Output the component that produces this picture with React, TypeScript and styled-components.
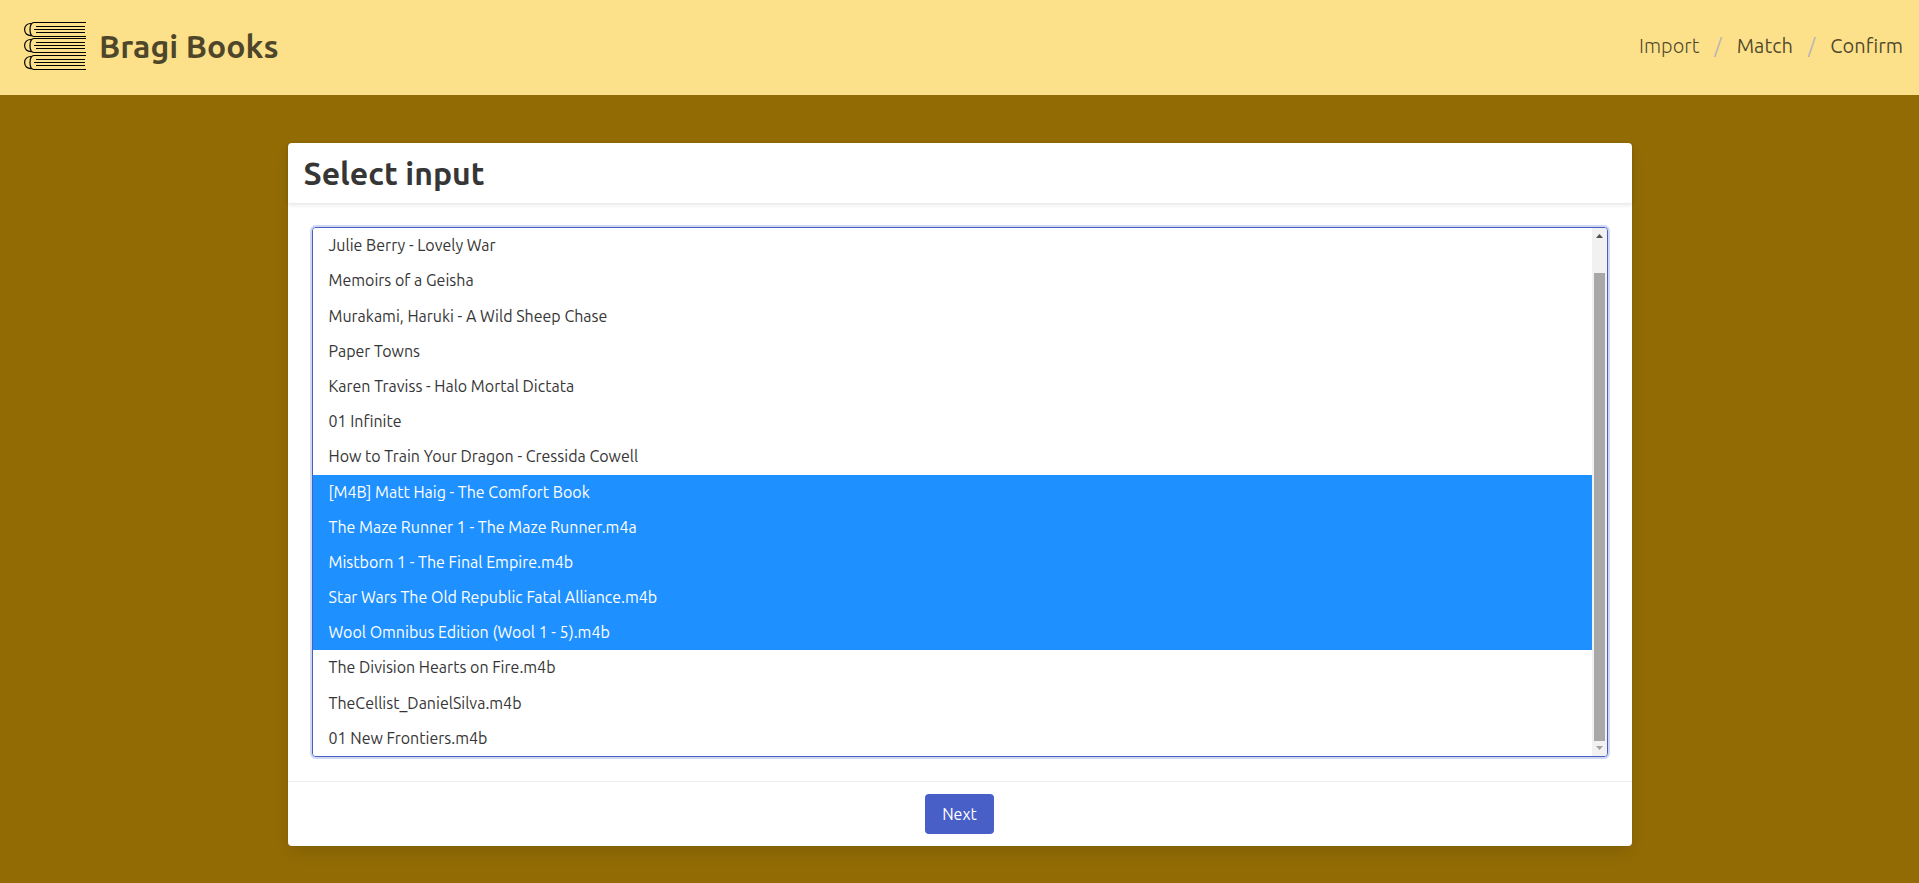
import React, { useEffect, useRef } from "react";
import styled, { createGlobalStyle } from "styled-components";

const GlobalStyle = createGlobalStyle`
  *, *::before, *::after { box-sizing: border-box; }
  html { background: #926b05; }
  body {
    margin: 0;
    color: #363636;
    font-family: Ubuntu, "Open Sans", "Noto Sans", sans-serif;
    font-size: 16px;
    line-height: 24px;
  }
`;

const Header = styled.header`
  display: flex;
  align-items: center;
  justify-content: space-between;
  min-height: 95px;
  padding: 0 16px 4px 24px;
  background: #fce08a;
`;

const Brand = styled.a`
  display: flex;
  align-items: center;
  gap: 12px;
  color: rgba(0, 0, 0, 0.7);
  font-size: 32px;
  font-weight: 700;
  line-height: 36px;
  text-decoration: none;
`;

const Logo = styled.svg`
  width: 63px;
  height: 50px;
`;

const Steps = styled.ol`
  display: flex;
  margin: 0;
  padding: 0;
  list-style: none;
  font-size: 20px;
  line-height: 30px;
`;

const Step = styled.li`
  display: flex;

  & + &::before {
    content: "/";
    padding: 0 15px;
    color: #b5b5b5;
  }
`;

const StepLink = styled.a<{ $light?: boolean }>`
  color: rgba(0, 0, 0, 0.7);
  font-weight: ${(p) => (p.$light ? 300 : 400)};
  text-decoration: none;
`;

const Main = styled.main`
  padding: 48px 24px 37px;
`;

const Card = styled.form`
  max-width: 1344px;
  margin: 0 auto;
  background: #fff;
  border-radius: 4px;
  box-shadow: 0 8px 16px -2px rgba(10, 10, 10, 0.1), 0 0 0 1px rgba(10, 10, 10, 0.02);
`;

const CardHeader = styled.div`
  padding: 12px 16px;
  box-shadow: 0 2px 4px rgba(10, 10, 10, 0.1);
`;

const Title = styled.label`
  display: block;
  font-size: 32px;
  font-weight: 700;
  line-height: 36px;
`;

const CardContent = styled.div`
  padding: 24px;
`;

const ListBox = styled.div`
  display: flex;
  overflow: hidden;
  background: #fff;
  border: 1px solid #485fc7;
  border-radius: 4px;
  box-shadow: 0 0 0 2px rgba(72, 95, 199, 0.25);
`;

const FileList = styled.select`
  flex: 1;
  min-width: 0;
  padding: 0;
  color: #363636;
  font: inherit;
  background: #fff;
  border: 0;
  border-radius: 0;
  outline: none;
  scrollbar-width: none;
`;

const FileOption = styled.option`
  box-sizing: content-box;
  padding: 8px 16px;

  &:checked {
    color: #fff;
    -webkit-text-fill-color: #fff;
    background: linear-gradient(#1e90ff, #1e90ff);
  }
`;

const ScrollBar = styled.div`
  display: flex;
  flex-direction: column;
  width: 15px;
  background: #f1f1f1;
`;

const ScrollArrow = styled.svg`
  width: 15px;
  height: 15px;
`;

const ScrollTrack = styled.div`
  display: flex;
  flex: 1;
  flex-direction: column;
  justify-content: flex-end;
  padding: 0 2px;
`;

const ScrollThumb = styled.div`
  height: 94%;
  background: #a8a8a8;
`;

const CardFooter = styled.div`
  display: flex;
  justify-content: center;
  padding: 12px;
  border-top: 1px solid #ededed;
`;

const NextButton = styled.button`
  height: 40px;
  padding: 0 17px;
  color: #fff;
  font: inherit;
  background: #485fc7;
  border: 0;
  border-radius: 4px;
  cursor: pointer;
`;

const files = [
  "Julie Berry - Lovely War",
  "Memoirs of a Geisha",
  "Murakami, Haruki - A Wild Sheep Chase",
  "Paper Towns",
  "Karen Traviss - Halo Mortal Dictata",
  "01 Infinite",
  "How to Train Your Dragon - Cressida Cowell",
  "[M4B] Matt Haig - The Comfort Book",
  "The Maze Runner 1 - The Maze Runner.m4a",
  "Mistborn 1 - The Final Empire.m4b",
  "Star Wars The Old Republic Fatal Alliance.m4b",
  "Wool Omnibus Edition (Wool 1 - 5).m4b",
  "The Division Hearts on Fire.m4b",
  "TheCellist_DanielSilva.m4b",
  "01 New Frontiers.m4b",
];

const Book = ({ y }: { y: number }) => (
  <g transform={`translate(0 ${y})`}>
    <path d="M62 .5H10C7 .5 6 4 6 7.500S7 14.500 10 14.500H62" />
    <path d="M7.500 1.500C3 1.200 .6 4 .6 7.600S3 13.800 7.500 13.600" />
    <path d="M12 4.500H61M10 7.500H61M12 10.500H61" strokeWidth="1" />
  </g>
);

export default function App() {
  const list = useRef<HTMLSelectElement>(null);

  useEffect(() => {
    const el = list.current;
    if (!el) return;
    el.focus();
    el.scrollTop = el.scrollHeight;
  }, []);

  return (
    <>
      <GlobalStyle />
      <Header>
        <Brand href="#">
          <Logo viewBox="0 0 63 50" fill="none" stroke="#000" strokeWidth="1.2" aria-hidden="true">
            <Book y={1} />
            <Book y={17} />
            <Book y={34} />
          </Logo>
          Bragi Books
        </Brand>
        <nav aria-label="Steps">
          <Steps>
            <Step><StepLink href="#import" $light>Import</StepLink></Step>
            <Step><StepLink href="#match">Match</StepLink></Step>
            <Step><StepLink href="#confirm">Confirm</StepLink></Step>
          </Steps>
        </nav>
      </Header>
      <Main>
        <Card>
          <CardHeader>
            <Title htmlFor="files">Select input</Title>
          </CardHeader>
          <CardContent>
            <ListBox>
              <FileList id="files" ref={list} multiple size={15} defaultValue={files.slice(7, 12)}>
                <FileOption value="" />
                {files.map((file) => (
                  <FileOption key={file} value={file}>{file}</FileOption>
                ))}
              </FileList>
              <ScrollBar aria-hidden="true">
                <ScrollArrow viewBox="0 0 15 15"><path d="M4 10L7.500 6L11 10z" fill="#505050" /></ScrollArrow>
                <ScrollTrack><ScrollThumb /></ScrollTrack>
                <ScrollArrow viewBox="0 0 15 15"><path d="M4 5L7.500 9L11 5z" fill="#a3a3a3" /></ScrollArrow>
              </ScrollBar>
            </ListBox>
          </CardContent>
          <CardFooter>
            <NextButton type="button">Next</NextButton>
          </CardFooter>
        </Card>
      </Main>
    </>
  );
}
